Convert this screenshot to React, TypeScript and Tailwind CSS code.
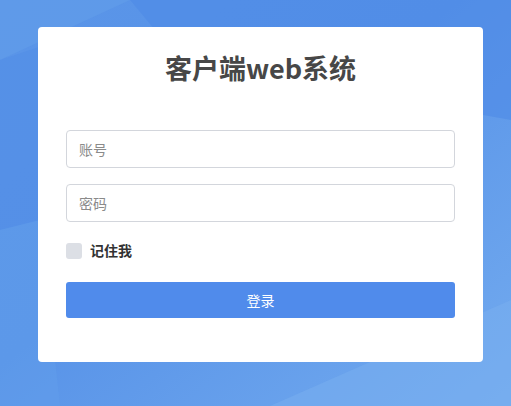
import { useState } from "react";

const font = { fontFamily: '"Noto Sans CJK SC", "Noto Sans", sans-serif' };

const Background = () => (
  <svg className="absolute inset-0 h-full w-full" viewBox="0 0 511 406" preserveAspectRatio="none">
    <defs>
      <linearGradient id="bg" x1="0" y1="0" x2="1" y2="1">
        <stop offset="0" stopColor="#5a95e8" />
        <stop offset="0.45" stopColor="#5893e8" />
        <stop offset="1" stopColor="#73abef" />
      </linearGradient>
    </defs>
    <rect width="511" height="406" fill="url(#bg)" />
    <polygon points="130,0 511,0 511,120 180,60" fill="#4d89e5" opacity="0.55" />
    <polygon points="0,0 130,0 0,60" fill="#64a0ea" opacity="0.5" />
    <polygon points="0,60 60,40 40,220 0,230" fill="#4e8ae6" opacity="0.35" />
    <polygon points="0,230 40,220 60,406 0,406" fill="#639fea" opacity="0.4" />
    <polygon points="270,406 511,300 511,406" fill="#79b0f0" opacity="0.5" />
  </svg>
);

export default function App() {
  const [remember, setRemember] = useState(false);
  return (
    <div className="relative min-h-screen w-full overflow-hidden" style={font}>
      <Background />
      <div className="relative pl-[38px] pt-[27px]">
        <div className="w-[445px] rounded bg-white px-[28px] pt-[22px] pb-[44px]">
          <h1 className="text-center text-[27px] font-bold leading-[38px] text-[#474747]">
            客户端web系统
          </h1>
          <div className="mt-[43px] flex flex-col gap-[16px]">
            <input
              placeholder="账号"
              className="h-[38px] w-full rounded border border-[#d3d6dc] px-[12px] text-[14px] text-[#333] outline-none placeholder:text-[#8a8a8a]"
            />
            <input
              type="password"
              placeholder="密码"
              className="h-[38px] w-full rounded border border-[#d3d6dc] px-[12px] text-[14px] text-[#333] outline-none placeholder:text-[#8a8a8a]"
            />
          </div>
          <label className="mt-[18px] flex items-center gap-[8px]">
            <span
              onClick={() => setRemember(!remember)}
              className={remember ? "h-[16px] w-[16px] rounded-[3px] bg-[#4f8aea]" : "h-[16px] w-[16px] rounded-[3px] bg-[#dcdfe5]"}
            />
            <span className="text-[14px] font-bold text-[#333]">记住我</span>
          </label>
          <button className="mt-[21px] h-[36px] w-full rounded-[3px] bg-[#508beb] text-[14px] text-white">
            登录
          </button>
        </div>
      </div>
    </div>
  );
}
